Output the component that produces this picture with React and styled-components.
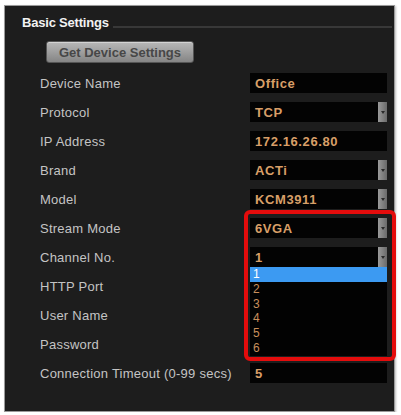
import React from "react";
import styled, { createGlobalStyle } from "styled-components";

const GlobalStyle = createGlobalStyle`
  body {
    margin: 0;
    background: #ffffff;
    font-family: "Liberation Sans", Arial, sans-serif;
  }
`;

const Panel = styled.div`
  margin: 5px 0 0 4px;
  width: 389px;
  height: 405px;
  background: #1d1d1d;
  border: 1px solid #9a9a9a;
  box-shadow: 1px 1px 2px rgba(0, 0, 0, 0.25);
  position: relative;
`;

const Header = styled.div`
  display: flex;
  align-items: center;
  gap: 4px;
  padding: 9px 2px 0 17px;
  color: #f2f2f2;
  font-size: 13px;
  font-weight: bold;
  line-height: 16px;
  letter-spacing: -0.2px;

  &::after {
    content: "";
    flex: 1;
    height: 2px;
    margin-top: 8px;
    background: #383838;
  }
`;

const Button = styled.button`
  margin: 10px 0 0 41px;
  width: 148px;
  height: 22px;
  border: 1px solid #555;
  border-radius: 3px;
  background: linear-gradient(#b8b8b8, #858585);
  color: #474747;
  font-family: inherit;
  font-size: 13px;
  font-weight: bold;
  box-shadow: inset 0 1px 0 rgba(255, 255, 255, 0.4);
`;

const Form = styled.div`
  display: grid;
  grid-template-columns: 210px 137px;
  row-gap: 9px;
  padding: 10px 0 0 35px;
`;

const Label = styled.div`
  display: flex;
  align-items: center;
  height: 20px;
  color: #c4c4c4;
  font-size: 13px;
  letter-spacing: 0.25px;
`;

const Field = styled.div`
  position: relative;
  height: 20px;
  background: #030303;
  display: flex;
  align-items: center;
  padding-left: 5px;
  box-sizing: border-box;
  color: #d89f68;
  font-size: 13px;
  font-weight: bold;
  letter-spacing: 0.6px;
`;

const Arrow = styled.div`
  position: absolute;
  right: 0;
  top: 0;
  bottom: 0;
  width: 9px;
  background: linear-gradient(90deg, #9a9a9a, #6a6a6a);
  display: flex;
  align-items: center;
  justify-content: center;

  &::after {
    content: "";
    border-left: 2px solid transparent;
    border-right: 2px solid transparent;
    border-top: 3px solid #2a2a2a;
  }
`;

const List = styled.ul`
  position: absolute;
  top: 100%;
  left: 0;
  width: 137px;
  margin: 0;
  padding: 0;
  list-style: none;
  background: #020202;
  z-index: 2;
`;

const Option = styled.li`
  height: 14.8px;
  line-height: 15px;
  padding-left: 3px;
  font-size: 12px;
  font-weight: normal;
  letter-spacing: 0;
  color: ${(p) => (p.$active ? "#ffffff" : "#c98f5c")};
  background: ${(p) => (p.$active ? "#3c9af2" : "transparent")};
`;

const Highlight = styled.div`
  position: absolute;
  top: -8px;
  left: -6px;
  width: 152px;
  height: 151px;
  box-sizing: border-box;
  border: 4px solid #e40c0c;
  border-radius: 6px;
  z-index: 3;
  pointer-events: none;
`;

const rows = [
  { label: "Device Name", value: "Office" },
  { label: "Protocol", value: "TCP", select: true },
  { label: "IP Address", value: "172.16.26.80" },
  { label: "Brand", value: "ACTi", select: true },
  { label: "Model", value: "KCM3911", select: true },
  { label: "Stream Mode", value: "6VGA", select: true, mark: true },
  { label: "Channel No.", value: "1", select: true, open: true },
  { label: "HTTP Port", value: "" },
  { label: "User Name", value: "" },
  { label: "Password", value: "" },
  { label: "Connection Timeout (0-99 secs)", value: "5" },
];

const App = () => {
  return (
    <>
      <GlobalStyle />
      <Panel>
        <Header>Basic Settings</Header>
        <Button>Get Device Settings</Button>
        <Form>
          {rows.map((r) => (
            <React.Fragment key={r.label}>
              <Label>{r.label}</Label>
              <Field>
                {r.value}
                {r.select && <Arrow />}
                {r.mark && <Highlight />}
                {r.open && (
                  <List>
                    {["1", "2", "3", "4", "5", "6"].map((n) => (
                      <Option key={n} $active={n === "1"}>
                        {n}
                      </Option>
                    ))}
                  </List>
                )}
              </Field>
            </React.Fragment>
          ))}
        </Form>
      </Panel>
    </>
  );
};

export default App;
